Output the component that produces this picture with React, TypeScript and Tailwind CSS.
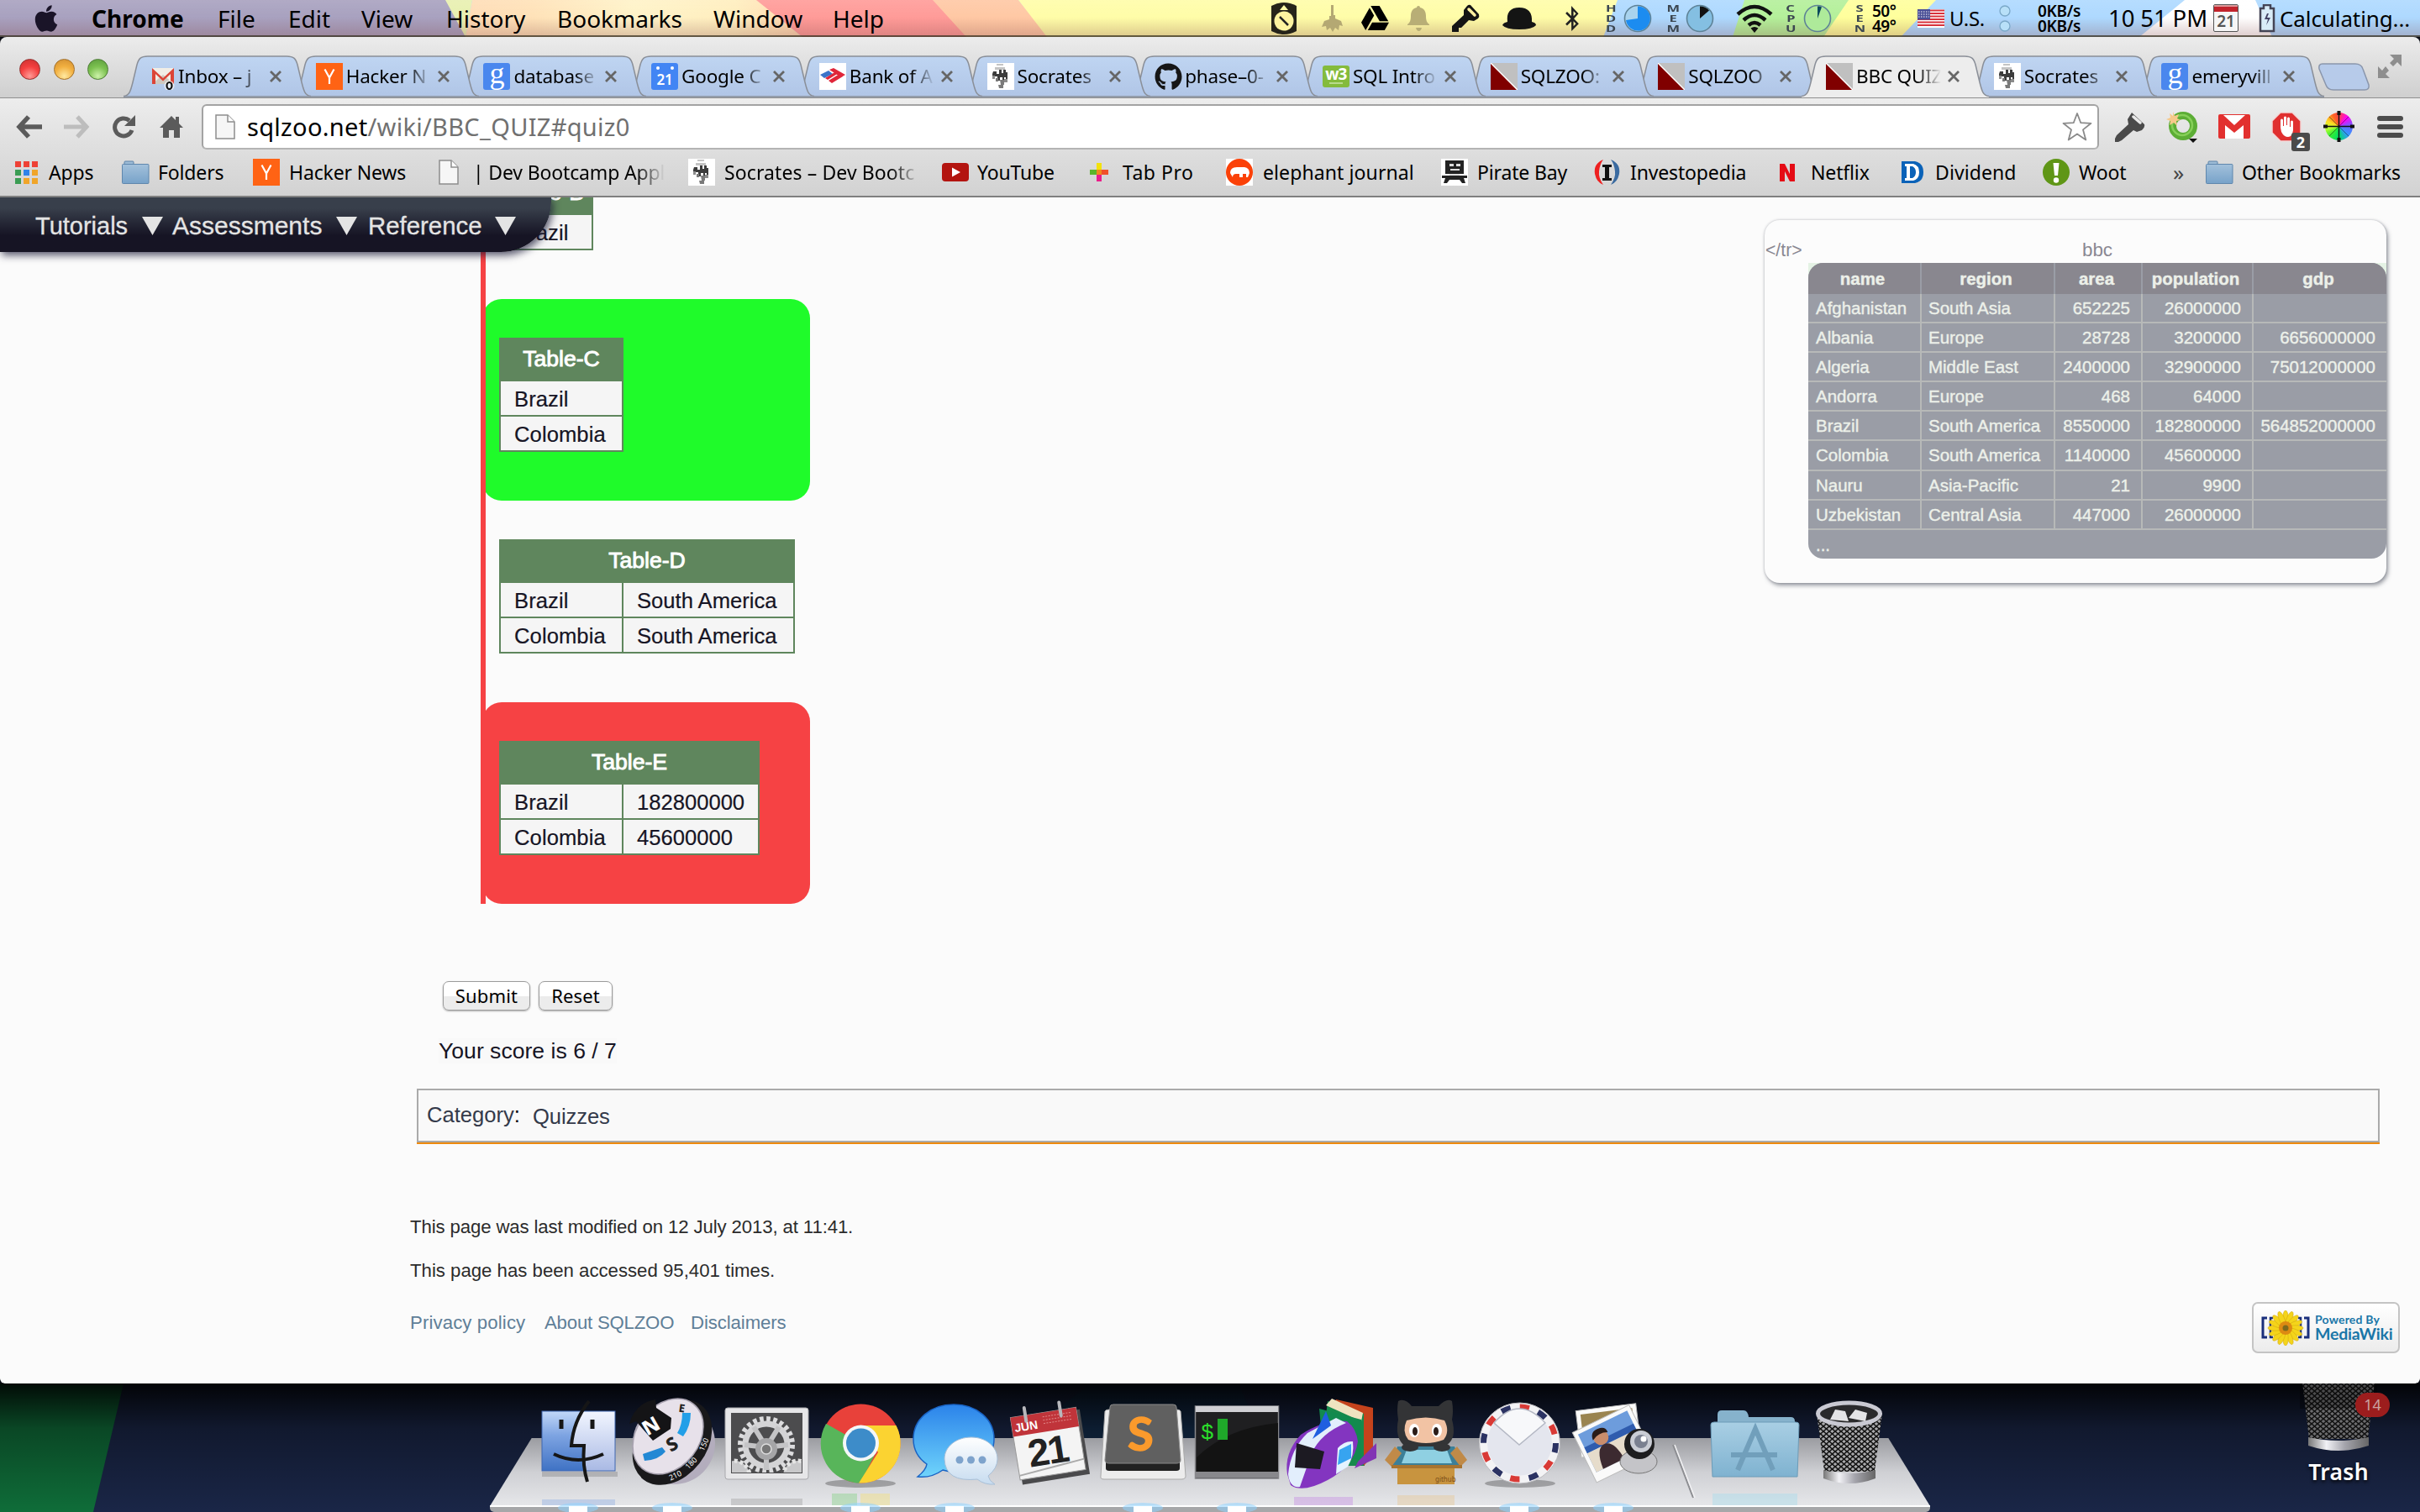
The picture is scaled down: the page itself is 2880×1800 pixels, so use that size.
import React from "react";
import { FaGithub, FaGoogleDrive, FaBluetoothB, FaApple } from "react-icons/fa";

/* ---------- shared favicons ---------- */

const Yc = () => (
  <svg width="32" height="32" viewBox="0 0 32 32">
    <rect width="32" height="32" fill="#ff6314" />
    <path d="M10.500 7.500L16 17.500L21.500 7.500M16 17V25" stroke="#fff" strokeWidth="2.200" fill="none" />
  </svg>
);

const GoogleG = () => (
  <div className="flex h-8 w-8 items-center justify-center rounded-[3px] bg-[#4a87ee]">
    <span className="-mt-[9px] font-['Liberation_Serif',serif] text-[36px] leading-8 text-white">g</span>
  </div>
);

const Cal21 = () => (
  <div className="flex h-8 w-8 flex-col items-center rounded-[3px] bg-[#4285f4]">
    <div className="flex gap-[13px] pt-[4px]">
      <div className="h-[4px] w-[4px] rounded-full bg-white" />
      <div className="h-[4px] w-[4px] rounded-full bg-white" />
    </div>
    <span className="mt-[4px] text-[17px] font-semibold leading-[16px] text-white">21</span>
  </div>
);

const Gmail = () => (
  <svg width="32" height="32" viewBox="0 0 32 32">
    <rect x="5" y="6" width="26" height="19" rx="1" fill="#f1ede6" />
    <path d="M18 14L31 25H5z" fill="#cfc9c0" />
    <path d="M5 25V6L18 18L31 6V25H27V13L18 21.500L9 13V25z" fill="#dc4437" />
    <circle cx="25.500" cy="27" r="6" fill="#fff" opacity=".7" />
    <ellipse cx="25.500" cy="27" rx="3" ry="4" fill="none" stroke="#111" strokeWidth="2.200" />
  </svg>
);

const Boa = () => (
  <svg width="32" height="32" viewBox="0 0 32 32">
    <rect width="32" height="32" fill="#fff" />
    <path d="M1 14L11 9L16 13L6 18z" fill="#3b74c9" />
    <path d="M12 8L17 6L31 14L26 17zM7 18L20 10L23 12L10 20zM11 21L24 13L28 16L15 24z" fill="#e0263a" />
  </svg>
);

const Socrates = () => (
  <svg width="32" height="32" viewBox="0 0 32 32">
    <rect width="32" height="32" fill="#fff" />
    <path d="M11 1h8v2h-8zM9 5h12v3H9z" fill="#c4c4c4" />
    <path d="M7 10h4v3h3v-5h3v4h2v-4h3v3h2v12h-2v-6h-2v5h-2v-5h-3v4h-3v-5H9v3H6v-6z" fill="#3c3c3c" />
    <path d="M10 18h3v4h-3zM15 20h5v6h-4zM13 26h6v4h-5z" fill="#7a7a7a" />
    <path d="M20 19h4v4h-4zM6 15h3v4H6z" fill="#8c8c8c" />
  </svg>
);

const W3 = () => (
  <div className="flex h-[26px] w-8 flex-col items-center rounded-[3px] bg-[#84bb3c]">
    <span className="text-[19px] font-bold leading-[20px] tracking-[-1px] text-white">w3</span>
    <div className="h-[2px] w-[16px] bg-[#b8db8c]" />
  </div>
);

const SqlZoo = () => (
  <svg width="32" height="32" viewBox="0 0 32 32">
    <rect width="32" height="32" fill="#c0c0c0" />
    <path d="M0 0V32H32z" fill="#800000" />
    <path d="M0 0L32 32" stroke="#fff" strokeWidth="1.500" />
  </svg>
);

const PageIcon = () => (
  <svg width="24" height="30" viewBox="0 0 24 30">
    <path d="M1 1H15L23 9V29H1z" fill="#f6f6f6" stroke="#8d8d8d" strokeWidth="1.500" />
    <path d="M15 1V9H23" fill="#fff" stroke="#8d8d8d" strokeWidth="1.500" />
  </svg>
);

const FolderIcon = () => (
  <svg width="33" height="28" viewBox="0 0 33 28">
    <path d="M3 6V2Q3 1 4 1H13Q14 1 14 2V6" fill="#9dbbd6" stroke="#5c83a8" />
    <rect x=".5" y="4.500" width="31.500" height="23" rx="1" fill="url(#fold)" stroke="#5f87ad" />
    <defs>
      <linearGradient id="fold" x2="0" y2="1">
        <stop stopColor="#a3c1db" />
        <stop offset="1" stopColor="#77a2c9" />
      </linearGradient>
    </defs>
  </svg>
);

/* ---------- macOS menu bar ---------- */

function MenuBackdrop() {
  return (
    <svg className="absolute inset-0" width="2880" height="44" viewBox="0 0 2880 44">
      <defs>
        <linearGradient id="peach">
          <stop stopColor="#ffdcb6" />
          <stop offset=".2" stopColor="#ffe2b8" />
          <stop offset=".5" stopColor="#fff3c8" />
          <stop offset=".8" stopColor="#ffeebe" />
          <stop offset="1" stopColor="#ffd8b0" />
        </linearGradient>
      </defs>
      <rect width="2880" height="44" fill="#aed9ff" />
      <path d="M0 0H532L556 44H0z" fill="#a8a1bf" />
      <path d="M530 0H562L554 44z" fill="#e8f0b0" />
      <path d="M562 0H902L955 44H554z" fill="url(#peach)" />
      <path d="M900 0H1112L1152 44H955z" fill="#ff9b98" />
      <path d="M1110 0H1212L1248 44H1150z" fill="#ffc8a4" />
      <path d="M1212 0H1925L1908 44H1246z" fill="#fffda8" />
      <path d="M2076 0H2202L2172 44H2062z" fill="#b4f09a" />
      <path d="M2200 0H2304L2262 44H2170z" fill="#ffff9c" />
      <path d="M2600 0H2684L2704 44H2546z" fill="#ffffff" />
    </svg>
  );
}

function Stack({ t }: { t: string }) {
  return (
    <div className="flex w-[14px] flex-col items-center text-[11px] font-bold leading-[12px] text-[#3b4650]">
      {t.split("").map((c, i) => (
        <span key={i} className="scale-x-150">{c}</span>
      ))}
    </div>
  );
}

function Pie({ base, fill, d }: { base: string; fill: string; d: string }) {
  return (
    <svg width="34" height="34" viewBox="0 0 34 34">
      <circle cx="17" cy="17" r="15.500" fill={base} stroke="#5e8296" strokeWidth="1.600" />
      <path d={d} fill={fill} />
    </svg>
  );
}

function MenuBar() {
  return (
    <div className="relative h-11 w-full shrink-0 overflow-hidden">
      <MenuBackdrop />
      <div className="absolute inset-0 border-b-2 border-[#3a3020]/80 bg-linear-to-b from-white/10 via-transparent to-[#804040]/25" />
      <div className="relative flex h-[43px] items-center whitespace-nowrap text-[28px] leading-[42px] text-black">
        <div className="w-[109px] shrink-0 pl-[37px]">
          <FaApple size={36} color="#1a1428" />
        </div>
        <span className="w-[150px] shrink-0 text-[28px] font-bold">Chrome</span>
        <span className="w-[84px] shrink-0">File</span>
        <span className="w-[87px] shrink-0">Edit</span>
        <span className="w-[101px] shrink-0">View</span>
        <span className="w-[132px] shrink-0">History</span>
        <span className="w-[186px] shrink-0">Bookmarks</span>
        <span className="w-[142px] shrink-0">Window</span>
        <span className="w-[522px] shrink-0">Help</span>
        <div className="w-[59px] shrink-0">
          <svg width="30" height="38" viewBox="0 0 30 38">
            <path d="M0 4Q15 -4 30 4V34Q15 42 0 34z" fill="#26241a" />
            <path d="M15 3L20 9H10z" fill="#fffda8" />
            <circle cx="15" cy="22" r="11.500" fill="#fdf3a0" />
            <path d="M10 17L20 27" stroke="#222" strokeWidth="2.500" />
          </svg>
        </div>
        <div className="w-[48px] shrink-0">
          <svg width="26" height="34" viewBox="0 0 26 34">
            <path d="M12 1h3v12h2v4l7 3 2 6-4-1-1 6-4-3-3 5-3-5-4 3-1-5-5 1 3-7 6-2v-4h2z" fill="#b4a873" />
          </svg>
        </div>
        <div className="w-[54px] shrink-0">
          <FaGoogleDrive size={33} />
        </div>
        <div className="w-[54px] shrink-0">
          <svg width="28" height="32" viewBox="0 0 28 32">
            <path d="M12 3a2 2 0 014 0c5 1 7 5 7 10s1 8 4 10v1H1v-1c3-2 4-5 4-10s2-9 7-10zM11 27h7q-1 4-3.500 4T11 27z" fill="#b8ae76" />
          </svg>
        </div>
        <div className="w-[60px] shrink-0">
          <svg width="33" height="33" viewBox="0 0 33 33">
            <path d="M18 2Q20 0 22 1L32 12Q33 15 31 17L26 20L20 19L11 28H8V33H0V26L14 13V7z" fill="#141414" />
            <path d="M20 6L27 13" stroke="#fff0a0" strokeWidth="3.500" strokeLinecap="round" />
          </svg>
        </div>
        <div className="w-[74px] shrink-0">
          <svg width="40" height="28" viewBox="0 0 40 28">
            <path d="M6 18Q4 1 20 1T35 18Q40 19 40 22Q36 27 20 27T0 22Q1 19 6 18z" fill="#141414" />
          </svg>
        </div>
        <div className="w-[48px] shrink-0">
          <FaBluetoothB size={30} className="-ml-[6px]" color="#222" />
        </div>
        <div className="w-[22px] shrink-0"><Stack t="HDD" /></div>
        <div className="w-[52px] shrink-0">
          <Pie base="#a9d3ee" fill="#1c8cf0" d="M17 17V2.500A14.500 14.500 0 113 19z" />
        </div>
        <div className="w-[22px] shrink-0"><Stack t="MEM" /></div>
        <div className="w-[60px] shrink-0">
          <Pie base="#84bfe2" fill="#111" d="M17 17V2.500A14.500 14.500 0 0128 7.500z" />
        </div>
        <div className="w-[58px] shrink-0">
          <svg width="44" height="34" viewBox="0 0 44 34" fill="none" stroke="#111" strokeWidth="4.500">
            <path d="M2 12Q22 -6 42 12M9 19Q22 7 35 19M15 25Q22 19 29 25" />
            <path d="M22 34L17.500 28.500Q22 25.500 26.500 28.500z" fill="#111" stroke="none" />
          </svg>
        </div>
        <div className="w-[22px] shrink-0"><Stack t="CPU" /></div>
        <div className="w-[60px] shrink-0">
          <Pie base="#aeea9a" fill="#0a4a5c" d="M17 17V2.500Q20 2 22 3.500z" />
        </div>
        <div className="w-[22px] shrink-0"><Stack t="SEN" /></div>
        <div className="w-[54px] shrink-0 text-[19px] font-semibold leading-[18px] tracking-[-0.500px]">
          <div>50°</div>
          <div>49°</div>
        </div>
        <div className="w-[38px] shrink-0">
          <svg width="32" height="22" viewBox="0 0 32 22">
            <rect width="32" height="22" fill="#fff" />
            <path d="M0 1.500H32M0 5H32M0 8.500H32M0 12H32M0 15.500H32M0 19H32" stroke="#d8323c" strokeWidth="1.900" />
            <rect width="15" height="12.500" fill="#4a4f96" />
            <path d="M1 3H14M1 6H14M1 9H14" stroke="#fff" strokeWidth="1" strokeDasharray="1.500 1.500" />
          </svg>
        </div>
        <span className="w-[59px] shrink-0 text-[24px] tracking-[-0.300px]">U.S.</span>
        <div className="w-[46px] shrink-0">
          <svg width="14" height="34" viewBox="0 0 14 34" fill="#b8e0f8" stroke="#7aa8c8" strokeWidth="1.300">
            <circle cx="7" cy="8" r="6" />
            <circle cx="7" cy="26" r="6" />
          </svg>
        </div>
        <div className="w-[84px] shrink-0 text-[19px] font-semibold leading-[18px] tracking-[-0.300px]">
          <div>0KB/s</div>
          <div>0KB/s</div>
        </div>
        <span className="w-[125px] shrink-0 text-[27.500px] tracking-[-0.100px]">10 51 PM</span>
        <div className="w-[54px] shrink-0">
          <div className="h-[33px] w-[30px] rounded-[2px] border-[1.500px] border-[#555] bg-[#f6f6f6] text-center">
            <div className="h-[8px] border-t-2 border-[#d99] bg-[#c2242c]" />
            <div className="text-[19px] font-semibold leading-[23px] text-[#555]">21</div>
          </div>
        </div>
        <div className="w-[25px] shrink-0">
          <svg width="20" height="34" viewBox="0 0 20 34">
            <path d="M6 1h8v4h4v27H2V5h4z" fill="#d9ecf8" stroke="#445" strokeWidth="2.500" />
            <path d="M10 11L7 18h4l-2 7 5-9h-4l2-5z" fill="#446" />
          </svg>
        </div>
        <span className="shrink-0 text-[26px] tracking-[-0.100px]">Calculating...</span>
      </div>
    </div>
  );
}

/* ---------- Chrome window ---------- */

const tabs: { icon: React.ReactNode; title: string; z: string; active?: boolean }[] = [
  { icon: <Gmail />, title: "Inbox – j", z: "z-[13]" },
  { icon: <Yc />, title: "Hacker N", z: "z-[12]" },
  { icon: <GoogleG />, title: "database", z: "z-[11]" },
  { icon: <Cal21 />, title: "Google C", z: "z-[10]" },
  { icon: <Boa />, title: "Bank of A", z: "z-[9]" },
  { icon: <Socrates />, title: "Socrates", z: "z-[8]" },
  { icon: <FaGithub size={33} color="#161616" />, title: "phase–0-", z: "z-[7]" },
  { icon: <W3 />, title: "SQL Intro", z: "z-[6]" },
  { icon: <SqlZoo />, title: "SQLZOO:", z: "z-[5]" },
  { icon: <SqlZoo />, title: "SQLZOO", z: "z-[4]" },
  { icon: <SqlZoo />, title: "BBC QUIZ", z: "z-[20]", active: true },
  { icon: <Socrates />, title: "Socrates", z: "z-[3]" },
  { icon: <GoogleG />, title: "emeryvill", z: "z-[2]" },
];

function Tab({ icon, title, z, active }: (typeof tabs)[number]) {
  return (
    <div className={`relative -mr-[23.300px] h-[50px] w-[223px] shrink-0 ${z}`}>
      <svg className="absolute inset-0" width="223" height="50" viewBox="0 0 223 50">
        <path
          d="M0 48.500C7 48 8.500 42 11 32L16 11C18 4 20 1 29 1H194C203 1 205 4 207 11L212 32C214.500 42 216 48 223 48.500V50H0z"
          fill={active ? "#ededed" : "url(#tabfill)"}
        />
        <path
          d="M0 48.500C7 48 8.500 42 11 32L16 11C18 4 20 1 29 1H194C203 1 205 4 207 11L212 32C214.500 42 216 48 223 48.500"
          fill="none"
          stroke="#8a8f98"
          strokeWidth="1.500"
        />
        {!active && <path d="M0 49H223" stroke="#8a8f98" strokeWidth="1.500" />}
        <defs>
          <linearGradient id="tabfill" x2="0" y2="1">
            <stop stopColor="#bfd5f2" />
            <stop offset="1" stopColor="#b0c5e6" />
          </linearGradient>
        </defs>
      </svg>
      <div className="relative flex h-[50px] items-center pl-[29px]">
        <div className="flex w-[36px] shrink-0 items-center">{icon}</div>
        <div className="mr-[4px] w-[104px] overflow-hidden whitespace-nowrap text-[22.500px] leading-8 tracking-[-0.200px] text-black [mask-image:linear-gradient(to_right,black_70%,transparent_97%)]">
          {title}
        </div>
        <svg width="16" height="16" viewBox="0 0 16 16" stroke="#666" strokeWidth="2.800">
          <path d="M2 2L14 14M14 2L2 14" />
        </svg>
      </div>
    </div>
  );
}

function TabStrip() {
  return (
    <div className="flex h-[73px] shrink-0 items-end border-b border-[#8f8f8f] bg-linear-to-b from-[#ececec] to-[#cfcfcf]">
      <div className="flex w-[147px] shrink-0 gap-[15.500px] self-center pl-[23px] pt-[4px]">
        <div className="h-[25px] w-[25px] rounded-full border-[1.500px] border-[#93302f] bg-[radial-gradient(circle_at_50%_85%,#ff9a96,#f4403f_50%,#c93030)]" />
        <div className="h-[25px] w-[25px] rounded-full border-[1.500px] border-[#a2702a] bg-[radial-gradient(circle_at_50%_85%,#ffe9a0,#f2b040_50%,#cf8c30)]" />
        <div className="h-[25px] w-[25px] rounded-full border-[1.500px] border-[#4d7c36] bg-[radial-gradient(circle_at_50%_85%,#ccf2a8,#7cc150_50%,#5a9a3c)]" />
      </div>
      {tabs.map((t, i) => (
        <Tab key={i} {...t} />
      ))}
      <div className="ml-[14px] flex h-[50px] w-[66px] shrink-0 items-start pt-[8px]">
        <svg width="66" height="36" viewBox="0 0 66 36">
          <path d="M7 2H46Q53 2 55 8L62 27Q63 33 57 33H20Q13 33 11 27L3 8Q2 2 7 2z" fill="#b7cbea" stroke="#8a96ac" strokeWidth="1.500" />
        </svg>
      </div>
      <div className="ml-[7px] h-[51px] shrink-0">
        <svg width="28" height="28" viewBox="0 0 28 28" fill="#8e8e8e">
          <path d="M14 0H28V14L23 9L18 14L14 10L19 5zM0 14V28H14L9 23L13 19L9 14L5 19z" />
        </svg>
      </div>
    </div>
  );
}

const RainbowWheel = () => (
  <div className="relative h-[37px] w-[37px]">
    <div className="absolute inset-[2px] rounded-full bg-[conic-gradient(#f44,#f0f_12%,#66f_25%,#39f_37%,#0d6_50%,#3e3_62%,#bf3_72%,#fd2_82%,#f62_92%,#f44)]" />
    <svg className="absolute inset-0" width="37" height="37" viewBox="0 0 37 37" stroke="#111">
      <path d="M18.500 1V36M1 18.500H36" strokeWidth="1.400" />
      <path d="M7 7L30 30M30 7L7 30" strokeWidth=".8" opacity=".6" />
      <path d="M18.500 0V5M18.500 32V37M0 18.500H5M32 18.500H37" strokeWidth="4" />
    </svg>
  </div>
);

function Toolbar() {
  return (
    <div className="flex h-[67px] shrink-0 items-center bg-linear-to-b from-[#ededed] to-[#dddddd]">
      <div className="w-[54px] shrink-0 pl-[19px]">
        <svg width="33" height="28" viewBox="0 0 33 28" fill="none" stroke="#5b5b5b" strokeWidth="5.500">
          <path d="M31 14H5M15 2L4 14L15 26" />
        </svg>
      </div>
      <div className="w-[59px] shrink-0 pl-[20px]">
        <svg width="33" height="28" viewBox="0 0 33 28" fill="none" stroke="#bdbdbd" strokeWidth="5">
          <path d="M2 14H28M18 2L29 14L18 26" />
        </svg>
      </div>
      <div className="w-[60px] shrink-0 pl-[20px]">
        <svg width="30" height="28" viewBox="0 0 30 28">
          <path d="M24 18A10.500 10.500 0 1121 6.500" fill="none" stroke="#5b5b5b" strokeWidth="5" />
          <path d="M28 0V13H15z" fill="#5b5b5b" />
        </svg>
      </div>
      <div className="w-[67px] shrink-0 pl-[17px]">
        <svg width="28" height="28" viewBox="0 0 28 28" fill="#5b5b5b">
          <path d="M14 1L19 6V2H23V10L28 15H24V27H17V18H11V27H4V15H0z" />
        </svg>
      </div>
      <div className="flex h-[54px] w-[2258px] shrink-0 items-center rounded-[6px] border-2 border-[#a3a3a3] border-b-[#b4b4b4] bg-white pl-[14px] pr-[6px]">
        <PageIcon />
        <div className="ml-[14px] flex-1 whitespace-nowrap text-[29px] leading-[40px] tracking-[0.300px] text-black">
          sqlzoo.net<span className="text-[#707070]">/wiki/BBC_QUIZ#quiz0</span>
        </div>
        <svg width="36" height="36" viewBox="0 0 36 36">
          <path d="M18 2L22.300 13.200L34.500 13.800L25 21.400L28.300 33.500L18 26.500L7.700 33.500L11 21.400L1.500 13.800L13.700 13.200z" fill="#fff" stroke="#8a8a8a" strokeWidth="1.800" strokeLinejoin="round" />
        </svg>
      </div>
      <div className="w-[61px] shrink-0 pl-[19px]">
        <svg width="36" height="36" viewBox="0 0 36 36">
          <path d="M20 1L35 15Q36 19 32 22L26 24L22 22L8 34L4 36H0V32L2 28L16 15L15 9z" fill="#4a4a4a" />
          <path d="M22 6L30 13" stroke="#e8e8e8" strokeWidth="3.500" strokeLinecap="round" />
        </svg>
      </div>
      <div className="w-[62px] shrink-0 pl-[18px]">
        <svg width="40" height="38" viewBox="0 0 40 38">
          <circle cx="21" cy="18" r="12.500" fill="none" stroke="#5cad35" strokeWidth="9" />
          <circle cx="20" cy="17" r="12" fill="none" stroke="#86cf58" strokeWidth="2.500" />
          <path d="M9 1l2 5 5-2-2 5 4 2-5 1 1 6-4-4-5 3 1-5-5-2 5-2-1-5 4 3z" fill="#f6c98a" />
          <path d="M28 33H38L33 38z" fill="#111" />
        </svg>
      </div>
      <div className="w-[64px] shrink-0 pl-[19px]">
        <svg width="38" height="29" viewBox="0 0 38 29">
          <rect width="38" height="29" rx="2" fill="#e2302f" />
          <path d="M8 29V13L19 22L30 13V29z" fill="#fff" />
          <path d="M6 1H32L19 13z" fill="#fff" />
        </svg>
      </div>
      <div className="relative w-[58px] shrink-0 pl-[18px]">
        <svg width="36" height="36" viewBox="0 0 36 36">
          <path d="M11 1H25L35 11V25L25 35H11L1 25V11z" fill="#e02f2f" stroke="#f3d6d6" strokeWidth="1.500" />
          <path d="M11 19V10a1.500 1.500 0 013 0V17h1V7a1.500 1.500 0 013 0V16h1V8a1.500 1.500 0 013 0V18h1V12a1.500 1.500 0 013 0V22q-1 8-6 8-5 0-8-6z" fill="#fff" />
        </svg>
        <div className="absolute left-[42px] top-[25px] h-[22px] w-[22px] rounded-[3px] bg-[#4b4b4b] text-center text-[18px] font-bold leading-[22px] text-white">2</div>
      </div>
      <div className="w-[86px] shrink-0 pl-[22px]">
        <RainbowWheel />
      </div>
      <div className="flex flex-col gap-[4px]">
        <div className="h-[6px] w-[31px] rounded-[3px] bg-[#4c4c4c]" />
        <div className="h-[6px] w-[31px] rounded-[3px] bg-[#4c4c4c]" />
        <div className="h-[6px] w-[31px] rounded-[3px] bg-[#4c4c4c]" />
      </div>
    </div>
  );
}

const FADE = "[mask-image:linear-gradient(to_right,black_85%,transparent)] overflow-hidden";

const bookmarks: { icon: React.ReactNode; iw: string; text: string; tw: string; cls?: string }[] = [
  {
    icon: (
      <div className="grid w-max grid-cols-3 gap-[3px]">
        {["bg-[#ee4136]", "bg-[#ee4136]", "bg-[#ee4136]", "bg-[#3a9c53]", "bg-[#2f83ea]", "bg-[#f0a529]", "bg-[#3a9c53]", "bg-[#f0a529]", "bg-[#f0a529]"].map((c, i) => (
          <div key={i} className={`h-[7px] w-[7px] ${c}`} />
        ))}
      </div>
    ),
    iw: "w-[40px]",
    text: "Apps",
    tw: "w-[87px]",
  },
  { icon: <FolderIcon />, iw: "w-[43px]", text: "Folders", tw: "w-[113px]" },
  { icon: <Yc />, iw: "w-[43px]", text: "Hacker News", tw: "w-[178px]" },
  { icon: <PageIcon />, iw: "w-[41px]", text: "| Dev Bootcamp Appl", tw: "w-[256px]", cls: `${FADE} w-[228px]` },
  { icon: <Socrates />, iw: "w-[43px]", text: "Socrates – Dev Bootc", tw: "w-[259px]", cls: `${FADE} w-[232px] tracking-[0.100px]` },
  {
    icon: (
      <svg width="32" height="22" viewBox="0 0 32 22">
        <rect width="32" height="22" rx="4" fill="#b3140f" />
        <path d="M12 5.500V16.500L22 11z" fill="#fff" />
      </svg>
    ),
    iw: "w-[42px]",
    text: "YouTube",
    tw: "w-[134px]",
  },
  {
    icon: (
      <svg width="22" height="22" viewBox="0 0 22 22">
        <rect x="0" y="8" width="9" height="6" fill="#5ab52a" />
        <rect x="13" y="8" width="9" height="6" fill="#f0512a" />
        <rect x="8" y="0" width="6" height="9" fill="#f3e20c" />
        <rect x="8" y="8" width="6" height="6" fill="#f08a1c" />
        <rect x="8" y="14" width="6" height="8" fill="#ec1c8a" />
      </svg>
    ),
    iw: "w-[39px]",
    text: "Tab Pro",
    tw: "w-[123px]",
    cls: "tracking-[0.500px]",
  },
  {
    icon: (
      <svg width="32" height="32" viewBox="0 0 32 32">
        <rect width="32" height="32" fill="#fff" />
        <circle cx="16" cy="16" r="16" fill="#fb4108" />
        <path d="M5 17Q5 10 13 10H22Q28 11 28 17L26 22H24V18H20V22H16V18H12Q8 18 8 22z" fill="#fff" />
      </svg>
    ),
    iw: "w-[44px]",
    text: "elephant journal",
    tw: "w-[212px]",
    cls: "tracking-[0.100px]",
  },
  {
    icon: (
      <svg width="32" height="32" viewBox="0 0 32 32">
        <rect width="32" height="32" fill="#fff" />
        <path d="M5 2H27V18H5zM1 20H31V23H27L29 29H25L22 25H10L7 29H3L5 23H1z" fill="#222" />
        <path d="M10 6H15V9H10zM18 6H23V9H18zM11 12H22V14H11zM10 18H22V20H10z" fill="#ddd" />
      </svg>
    ),
    iw: "w-[43px]",
    text: "Pirate Bay",
    tw: "w-[138px]",
  },
  {
    icon: (
      <svg width="33" height="32" viewBox="0 0 33 32">
        <path d="M12 1Q0 6 2 18Q4 28 12 31Q6 22 7 15Q8 6 12 1z" fill="#ee2020" />
        <path d="M21 1Q33 6 31 18Q29 28 21 31Q27 22 26 15Q25 6 21 1z" fill="#3a6aa0" />
        <path d="M11 7H22V10H19V23H22V26H11V23H14V10H11z" fill="#111" />
      </svg>
    ),
    iw: "w-[44px]",
    text: "Investopedia",
    tw: "w-[178px]",
  },
  {
    icon: (
      <svg width="18" height="21" viewBox="0 0 18 21">
        <path d="M0 0H6L12 12V0H18V21H12L6 9V21H0z" fill="#e50b15" />
      </svg>
    ),
    iw: "w-[37px]",
    text: "Netflix",
    tw: "w-[108px]",
  },
  {
    icon: (
      <svg width="26" height="26" viewBox="0 0 26 26">
        <path d="M0 0H16Q26 2 26 13T16 26H0z" fill="#0a62b8" />
        <path d="M4 3H14Q21 5 21 13T14 23H4V20H6V6H4zM10 6V20H13Q17 18 17 13T13 6z" fill="#fff" fillRule="evenodd" />
      </svg>
    ),
    iw: "w-[40px]",
    text: "Dividend",
    tw: "w-[128px]",
    cls: "tracking-[0.100px]",
  },
  {
    icon: (
      <svg width="32" height="32" viewBox="0 0 32 32">
        <circle cx="16" cy="16" r="16" fill="#5f9616" />
        <path d="M12.500 5H19.500L18 20H14z" fill="#fff" />
        <circle cx="16" cy="25.500" r="3.200" fill="#fff" />
      </svg>
    ),
    iw: "w-[43px]",
    text: "Woot",
    tw: "w-[112px]",
  },
];

function BookmarksBar() {
  return (
    <div className="flex h-[51px] shrink-0 items-center whitespace-nowrap border-b-2 border-[#7f7f7f] bg-linear-to-b from-[#dddddd] to-[#d2d2d2] pb-[7px] pl-[18px] text-[23px] leading-8 tracking-[-0.150px] text-black">
      {bookmarks.map((b) => (
        <div key={b.text} className="flex shrink-0 items-center">
          <div className={`${b.iw} shrink-0`}>{b.icon}</div>
          <div className={`${b.tw} shrink-0`}>
            <div className={b.cls}>{b.text}</div>
          </div>
        </div>
      ))}
      <span className="w-[39px] shrink-0 text-[26px] leading-6 text-[#444]">»</span>
      <div className="w-[43px] shrink-0"><FolderIcon /></div>
      <span>Other Bookmarks</span>
    </div>
  );
}

/* ---------- page ---------- */

function SiteNav() {
  const items = [
    { t: "Tutorials", w: "w-[127px]", g: "w-[36px]", cls: "text-[29px]" },
    { t: "Assessments", w: "w-[195px]", g: "w-[38px]", cls: "text-[30px]" },
    { t: "Reference", w: "w-[151px]", g: "w-[26px]", cls: "text-[29.400px]" },
  ];
  return (
    <div className="absolute left-0 top-0 flex h-[65px] w-[656px] items-center rounded-br-[60px] bg-linear-to-b from-[#383f4b] from-20% to-[#161424] to-70% pl-[42px] pt-[2px] font-['Liberation_Sans',sans-serif] text-[#e4e4e4] shadow-[2px_4px_10px_rgba(20,20,50,0.7)] [-webkit-text-stroke:0.300px_#e4e4e4]">
      {items.map((i) => (
        <div key={i.t} className="flex items-center">
          <span className={`${i.w} ${i.cls} leading-[40px]`}>{i.t}</span>
          <div className={i.g}>
            <svg width="25" height="22" viewBox="0 0 25 22"><path d="M0 0H25L12.500 22z" fill="#e4e4e4" /></svg>
          </div>
        </div>
      ))}
    </div>
  );
}

function Answer({ title, rows, width, state }: { title: string; rows: string[][]; width: string; state: string }) {
  return (
    <div className={`relative -z-10 -ml-[4px] h-[240px] w-[390px] rounded-[23px] pl-[20px] pt-[46px] ${state}`}>
      <div className={`${width} border-2 border-t-0 border-[#5f865d] text-[25.600px] text-[#161424] [-webkit-text-stroke:0.200px_#161424]`}>
        <div className="h-[52px] bg-[#5f865d] text-center text-[26.600px] leading-[50px] text-white [-webkit-text-stroke:0.900px_white]">{title}</div>
        {rows.map((r, i) => (
          <div key={i} className={`flex bg-[#f5f5f5] leading-[42px] ${i > 0 ? "h-[42px] border-t-2 border-[#5f865d]" : "h-[40px]"}`}>
            <div className="w-[144px] shrink-0 pl-[16px] tracking-[0.080px]">{r[0]}</div>
            {r[1] && <div className="flex-1 border-l-2 border-[#5f865d] pl-[16px]">{r[1]}</div>}
          </div>
        ))}
      </div>
    </div>
  );
}

const bbc = [
  ["Afghanistan", "South Asia", "652225", "26000000", ""],
  ["Albania", "Europe", "28728", "3200000", "6656000000"],
  ["Algeria", "Middle East", "2400000", "32900000", "75012000000"],
  ["Andorra", "Europe", "468", "64000", ""],
  ["Brazil", "South America", "8550000", "182800000", "564852000000"],
  ["Colombia", "South America", "1140000", "45600000", ""],
  ["Nauru", "Asia-Pacific", "21", "9900", ""],
  ["Uzbekistan", "Central Asia", "447000", "26000000", ""],
];

function BbcCard() {
  const grid = "grid grid-cols-[133px_159px_104px_132px_160px]";
  const line = "border-[#b7b9b8]";
  return (
    <div className="absolute right-[40px] top-[27px] h-[432px] w-[740px] rounded-[18px] bg-[#fcfcfc] font-['Liberation_Sans',sans-serif] text-[20.480px] text-[#8a8892] shadow-[2px_3px_5px_rgba(60,65,80,0.5),0_0_3px_rgba(60,65,80,0.3)]">
      <div className="flex h-[51px] items-end leading-[31px]">
        <div className="w-[52px] pl-px text-[21.200px]">&lt;/tr&gt;</div>
        <div className="flex-1 text-center text-[22.400px]">bbc</div>
      </div>
      <div className="ml-[52px] bg-[linear-gradient(#e4f2e4_20px,transparent_20px)]">
        <div className="overflow-hidden rounded-[18px] bg-[#9a9da6] text-[#ecf0e9] [-webkit-text-stroke:0.400px_#ecf0e9]">
          <div className={`${grid} h-[36.500px] bg-[#89878f] text-center font-bold leading-[37px]`}>
            {["name", "region", "area", "population", "gdp"].map((h, i) => (
              <div key={h} className={i ? "border-l-2 border-[#9a9da6] pr-2 pl-1" : "pr-[4px]"}>{h}</div>
            ))}
          </div>
          {bbc.map((r) => (
            <div key={r[0]} className={`${grid} h-[35.200px] border-b-2 ${line} leading-[33.500px]`}>
              {r.map((c, i) => (
                <div key={i} className={`${i ? `border-l-2 ${line}` : ""} ${i > 1 ? "pr-[13px] text-right" : i ? "pl-[8px]" : "pl-[9px]"}`}>{c}</div>
              ))}
            </div>
          ))}
          <div className="h-[34px] pl-[9px] leading-[36px]">...</div>
        </div>
      </div>
    </div>
  );
}

const AquaButton = ({ children, w }: { children: string; w: string }) => (
  <button className={`${w} h-[35px] rounded-[7px] border-[1.500px] border-[#9b9b9b] bg-linear-to-b from-white from-50% to-[#ececec] to-50% pb-[1px] font-['Noto_Sans',sans-serif] text-[22px] leading-[28px] tracking-[0.150px] text-black shadow-[0_1px_2px_rgba(0,0,0,0.3)]`}>
    {children}
  </button>
);

function MediaWikiBadge() {
  return (
    <div className="flex h-[61px] w-[176px] items-center rounded-[7px] border-2 border-[#c4c4c4] bg-linear-to-b from-white to-[#ececec] pl-[9px]">
      <svg width="58" height="42" viewBox="0 0 58 42">
        <path d="M7 9H2V32H7M51 9H56V32H51" fill="none" stroke="#1a2f7c" strokeWidth="3" />
        <path d="M14 9H11V32H14M44 9H47V32H44" fill="none" stroke="#1a2f7c" strokeWidth="2.500" />
        <g fill="#f4d41a" stroke="#d7ac10" strokeWidth=".6">
          {Array.from({ length: 16 }, (_, i) => (
            <ellipse key={i} cx="29" cy="9" rx="3.200" ry="9" transform={`rotate(${i * 22.5} 29 21)`} />
          ))}
        </g>
        <circle cx="29" cy="21" r="8" fill="#dd8a12" />
        <circle cx="29" cy="21" r="3.500" fill="#7d6a1c" />
      </svg>
      <div className="ml-[6px] font-['Lato',sans-serif] font-bold text-[#1a76a8]">
        <div className="whitespace-nowrap text-[14px] leading-[15px] tracking-[0.200px]">Powered By</div>
        <div className="text-[19.500px] leading-[20px] tracking-[-0.200px]">MediaWiki</div>
      </div>
    </div>
  );
}

function WikiPage() {
  return (
    <div className="relative isolate flex-1 overflow-hidden rounded-b-[5px] bg-[#fbfbfb] font-['Liberation_Sans',sans-serif]">
      <div className="ml-[572px] mt-[-77px] flex flex-col border-l-[6px] border-[#f64244]">
        <div className="h-[198px]">
          <Answer title="Table-B" rows={[["Brazil"]]} width="w-[112px]" state="" />
        </div>
        <Answer title="Table-C" rows={[["Brazil"], ["Colombia"]]} width="w-[148px]" state="bg-[#1ffb2a]" />
        <Answer title="Table-D" rows={[["Brazil", "South America"], ["Colombia", "South America"]]} width="w-[352px]" state="" />
        <Answer title="Table-E" rows={[["Brazil", "182800000"], ["Colombia", "45600000"]]} width="w-[310px]" state="bg-[#f64244]" />
      </div>
      <div className="ml-[527px] mt-[92px] flex gap-[10px]">
        <AquaButton w="w-[104px]">Submit</AquaButton>
        <AquaButton w="w-[88px]">Reset</AquaButton>
      </div>
      <div className="ml-[522px] mt-[33px] h-[30px] w-max bg-[#f9f9f9] text-[26.600px] leading-[30px] text-[#161424]">Your score is 6 / 7</div>
      <div className="ml-[496px] mt-[30px] w-[2336px] border-b-2 border-[#ee8a0c]">
        <div className="flex h-[64px] items-center border-2 border-[#aaaaaa] bg-[#f9f9f9] pl-[10px] text-[25.600px] text-[#343a4a]">
          <span className="w-[126px] pb-[2px]">Category<span className="text-black">:</span></span>
          <span className="pt-[2px] tracking-[-0.100px]">Quizzes</span>
        </div>
      </div>
      <div className="flex justify-between pl-[488px] pr-[24px] text-[22.200px] leading-[30px] text-[#2b2b2b]">
        <div className="pt-[84px]">
          <p className="tracking-[-0.120px]">This page was last modified on 12 July 2013, at 11:41.</p>
          <p className="mt-[22px]">This page has been accessed 95,401 times.</p>
          <div className="mt-[32px] flex text-[#5f7f98]">
            <span className="w-[160px] tracking-[0.120px]">Privacy policy</span>
            <span className="w-[174px] tracking-[-0.200px]">About SQLZOO</span>
            <span className="tracking-[-0.100px]">Disclaimers</span>
          </div>
        </div>
        <div className="pt-[188px]"><MediaWikiBadge /></div>
      </div>
      <SiteNav />
      <BbcCard />
    </div>
  );
}

/* ---------- dock ---------- */

function Slot({ x, w, children }: { x: number; w: number; children: React.ReactNode }) {
  return (
    <svg className="shrink-0 overflow-visible" width={w} height="145" viewBox={`${x} 1655 ${w} 145`}>
      {children}
    </svg>
  );
}

const Lamp = ({ x }: { x: number }) => (
  <g>
    <ellipse cx={x} cy="1795" rx="24" ry="6" fill="#8fd4ff" opacity=".55" />
    <rect x={x - 11} y="1793" width="22" height="7" fill="#fff" />
  </g>
);

const polar = (cx: number, cy: number, r: number, deg: number) =>
  `${cx + r * Math.cos((deg * Math.PI) / 180)} ${cy + r * Math.sin((deg * Math.PI) / 180)}`;

function Basket({ x, y, w, h, id, wire }: { x: number; y: number; w: number; h: number; id: string; wire: string }) {
  return (
    <g>
      <defs>
        <pattern id={id} width="7" height="6" patternUnits="userSpaceOnUse">
          <rect width="7" height="6" fill={wire} />
          <path d="M0 0L7 6M7 0L0 6" stroke="#111" strokeWidth="1.500" />
        </pattern>
        <linearGradient id={`${id}m`}>
          <stop stopColor="#777" />
          <stop offset=".3" stopColor="#f2f2f6" />
          <stop offset=".6" stopColor="#a5a5ad" />
          <stop offset="1" stopColor="#666" />
        </linearGradient>
      </defs>
      <path d={`M${x + 2} ${y + 10}L${x + 11} ${y + h - 16}H${x + w - 11}L${x + w - 2} ${y + 10}z`} fill={`url(#${id})`} />
      <path
        d={`M${x + 10} ${y + h - 18}Q${x + w / 2} ${y + h - 10} ${x + w - 10} ${y + h - 18}V${y + h - 8}Q${x + w / 2} ${y + h + 4} ${x + 10} ${y + h - 8}z`}
        fill={`url(#${id}m)`}
      />
    </g>
  );
}

function Dock() {
  return (
    <div className="relative flex h-[145px] pl-[635px]">
      <div className="absolute bottom-[7px] left-[583px] h-[81px] w-[1714px] bg-linear-to-b from-[#9b9ca1] via-[#cfd0d4] to-[#e6e7ea] [clip-path:polygon(2.9%_0,97.100%_0,100%_100%,0_100%)]" />
      <div className="absolute bottom-0 left-[583px] h-[8px] w-[1714px] rounded-b-[5px] border-t-2 border-white bg-[#a6a7a9]" />
      <div className="relative flex">
        <Slot x={635} w={110}>
          <defs>
            <linearGradient id="fl" x2="0" y2="1"><stop stopColor="#c2d8f8" /><stop offset=".4" stopColor="#7ea4e2" /><stop offset="1" stopColor="#3f72c4" /></linearGradient>
            <linearGradient id="fr" x2="0" y2="1"><stop stopColor="#f2f6ff" /><stop offset="1" stopColor="#a9b9e4" /></linearGradient>
          </defs>
          <rect x="645" y="1752" width="90" height="6" fill="#555" opacity=".25" />
          <rect x="645" y="1680" width="87" height="71" fill="url(#fr)" />
          <path d="M645 1680H694Q682 1700 679 1721H693L695 1751H645z" fill="url(#fl)" />
          <rect x="645" y="1680" width="87" height="71" fill="none" stroke="#3f66b0" />
          <path d="M701 1668Q682 1692 680 1721H695Q693 1745 699 1764" fill="none" stroke="#161616" strokeWidth="4" />
          <path d="M659 1731Q688 1745 718 1731" fill="none" stroke="#161616" strokeWidth="4" />
          <path d="M668 1690V1701M705 1690V1701" stroke="#161616" strokeWidth="5" />
          <rect x="645" y="1785" width="87" height="7" fill="#7ea4e2" opacity=".35" />
          <Lamp x={688} />
        </Slot>
        <Slot x={745} w={112}>
          <ellipse cx="802" cy="1718" rx="49" ry="49" fill="#b3adbd" />
          <ellipse cx="800" cy="1717" rx="56" ry="41" transform="rotate(-52 800 1717)" fill="#19191b" />
          <ellipse cx="795" cy="1710" rx="49" ry="37" transform="rotate(-52 795 1710)" fill="#e7e1ea" stroke="#a8a2b0" strokeWidth="1.500" />
          <path d="M812 1682L822 1682Q822 1698 813 1710L806 1706Q812 1696 812 1682z" fill="#229fe8" />
          <path d="M765 1731L788 1723L792 1728Q784 1738 767 1739z" fill="#2288d4" />
          <path d="M749 1695Q756 1670 780 1666L781 1676L799 1688L798 1701L777 1715L757 1692z" fill="#141416" />
          <text x="766" y="1706" transform="rotate(-30 775 1700)" fontSize="24" fontWeight="800" fill="#fff">N</text>
          <text x="794" y="1727" transform="rotate(-30 800 1720)" fontSize="22" fontWeight="800" fill="#222">S</text>
          <text x="808" y="1681" transform="rotate(8 812 1676)" fontSize="13" fontWeight="800" fill="#222">E</text>
          <text x="796" y="1760" transform="rotate(-25 803 1757)" fontSize="9" fill="#fff">210</text>
          <text x="814" y="1745" transform="rotate(-45 822 1741)" fontSize="9" fill="#fff">180</text>
          <text x="829" y="1723" transform="rotate(-65 837 1719)" fontSize="9" fill="#fff">150</text>
          <Lamp x={800} />
        </Slot>
        <Slot x={857} w={113}>
          <rect x="863" y="1676" width="99" height="85" rx="3" fill="#e6e6e8" stroke="#a8a8ac" />
          <rect x="870" y="1682" width="85" height="72" fill="#4c4c4e" />
          <svg x="871" y="1683" width="83" height="70" viewBox="871 1683 83 70">
            <circle cx="912" cy="1720" r="30" fill="none" stroke="#dcdcde" strokeWidth="8" strokeDasharray="4.500 3.350" />
            <circle cx="912" cy="1720" r="25" fill="none" stroke="#d4d4d6" strokeWidth="7" />
            <circle cx="874" cy="1757" r="18" fill="#c8c8ca" stroke="#e4e4e4" strokeWidth="5" strokeDasharray="4 3" />
            <circle cx="950" cy="1757" r="18" fill="#c8c8ca" stroke="#e4e4e4" strokeWidth="5" strokeDasharray="4 3" />
            <path d={`M912 1723L${polar(912, 1720, 26, -125)}M912 1723L${polar(912, 1720, 26, -55)}M912 1723L${polar(912, 1720, 26, 180)}M912 1723L${polar(912, 1720, 26, 0)}M912 1723V1750`} stroke="#c4c4c6" strokeWidth="6" />
            <circle cx="912" cy="1725" r="13" fill="#a5a5a7" />
            <circle cx="912" cy="1725" r="6" fill="#777" stroke="#ddd" strokeWidth="1.500" />
          </svg>
          <rect x="870" y="1784" width="85" height="8" fill="#888" opacity=".3" />
        </Slot>
        <Slot x={970} w={109}>
          <ellipse cx="1024" cy="1766" rx="42" ry="5" fill="#333" opacity=".35" />
          <circle cx="1024.500" cy="1718.500" r="47" fill="#e8413a" />
          <path d="M1024.500 1718.500L983 1695A47 47 0 001024 1765.500L1046 1722z" fill="#58b55a" />
          <path d="M1024.500 1697H1066.500A47 47 0 011022 1765.500L1045 1729z" fill="#fbd331" />
          <path d="M983 1695L1004 1730L1024 1718z" fill="#58b55a" />
          <circle cx="1024.500" cy="1718" r="21.500" fill="#f5f7f8" />
          <circle cx="1024.500" cy="1718" r="17.500" fill="#3d8cc9" />
          <rect x="990" y="1778" width="30" height="14" fill="#7fd07f" opacity=".4" />
          <rect x="1024" y="1778" width="35" height="14" fill="#f4de70" opacity=".4" />
          <Lamp x={1024} />
        </Slot>
        <Slot x={1079} w={115}>
          <defs>
            <linearGradient id="msg" x2="0" y2="1"><stop stopColor="#2b83ea" /><stop offset="1" stopColor="#6fd4fb" /></linearGradient>
            <linearGradient id="msg2" x2="0" y2="1"><stop stopColor="#fff" /><stop offset="1" stopColor="#c7dcf0" /></linearGradient>
          </defs>
          <path d="M1135 1672C1163 1672 1183 1690 1183 1713S1163 1752 1135 1752Q1128 1752 1122 1750Q1108 1760 1092 1758Q1102 1750 1103 1743Q1087 1732 1087 1713C1087 1690 1107 1672 1135 1672z" fill="url(#msg)" stroke="#1a63c4" strokeWidth="1.500" />
          <path d="M1156 1711C1173 1711 1187 1722 1187 1737Q1187 1748 1176 1757Q1177 1763 1184 1767Q1172 1768 1163 1761Q1125 1765 1124 1737C1124 1722 1138 1711 1156 1711z" fill="url(#msg2)" stroke="#a8c0d8" />
          <g fill="#7ea3cc"><circle cx="1142" cy="1738" r="4.500" /><circle cx="1155.500" cy="1738" r="4.500" /><circle cx="1169" cy="1738" r="4.500" /></g>
          <Lamp x={1136} />
        </Slot>
        <Slot x={1194} w={109}>
          <g transform="rotate(-9 1248 1720)">
            <rect x="1210" y="1684" width="81" height="78" fill="#4a4a4c" />
            <rect x="1208" y="1681" width="79" height="75" fill="#f4f4f4" stroke="#999" />
            <rect x="1208" y="1681" width="79" height="23" fill="#c0343a" />
            <text x="1211" y="1699" fontSize="14" fontWeight="700" fill="#fff" fontFamily="Liberation Sans">JUN</text>
            <path d="M1246 1686H1280M1246 1690H1280M1246 1694H1280" stroke="#e08a8a" strokeDasharray="2 1.500" />
            <text x="1222" y="1743" fontSize="46" fontWeight="700" letterSpacing="-2" fill="#222" fontFamily="Liberation Sans">21</text>
            <path d="M1208 1751L1287 1743" stroke="#aaa" strokeWidth="2" />
            <path d="M1226 1672V1688M1268 1672V1688" stroke="#b8b8bc" strokeWidth="4" strokeLinecap="round" />
          </g>
        </Slot>
        <Slot x={1303} w={113}>
          <path d="M1315 1680Q1316 1678 1320 1678H1400Q1404 1678 1405 1680L1411 1757Q1411 1761 1406 1761H1314Q1309 1761 1310 1757z" fill="#ececec" stroke="#aaa" />
          <path d="M1316 1740H1404V1748Q1404 1751 1400 1751H1320Q1316 1751 1316 1748z" fill="#222" />
          <path d="M1321 1675Q1321 1672 1325 1672H1396Q1400 1672 1400 1675L1405 1738Q1405 1742 1400 1742H1320Q1315 1742 1315 1738z" fill="#606060" stroke="#8a8a8a" />
          <text x="1342" y="1727" fontSize="56" fontWeight="700" fill="#fb9a2c" stroke="#fb9a2c" strokeWidth="1.500" fontFamily="Lato">S</text>
          <Lamp x={1360} />
        </Slot>
        <Slot x={1416} w={110}>
          <rect x="1422.500" y="1674" width="99" height="86" fill="#1f1f21" stroke="#88888c" strokeWidth="1.500" />
          <path d="M1424 1735Q1460 1700 1521 1694V1752H1424z" fill="#131313" />
          <rect x="1423" y="1674" width="98" height="7" fill="#d0d0d4" />
          <rect x="1423" y="1752" width="98" height="7" fill="#88888c" />
          <text x="1429" y="1713" fontSize="26" fill="#2be02b" fontFamily="Liberation Mono">$</text>
          <rect x="1449" y="1689" width="12" height="25" fill="#1fa82a" />
          <Lamp x={1472} />
        </Slot>
        <Slot x={1526} w={118}>
          <path d="M1580 1668L1624 1680V1745H1571z" fill="#178a4c" />
          <path d="M1590 1666L1634 1676V1733L1623 1745V1683L1587 1672z" fill="#c5431c" />
          <path d="M1578 1673L1585 1665L1622 1682L1620 1692z" fill="#efe3c0" />
          <path d="M1570 1677L1620 1690V1738L1575 1730z" fill="#128a4e" />
          <path d="M1616 1740L1638 1718V1736L1612 1748z" fill="#8234b4" />
          <path d="M1532 1755Q1528 1730 1548 1708Q1575 1690 1603 1692Q1614 1700 1616 1716Q1612 1745 1580 1762Q1550 1778 1536 1768z" fill="#8335c0" />
          <path d="M1533 1755Q1536 1725 1556 1706L1590 1688L1602 1694Q1572 1706 1561 1730L1547 1770Q1535 1772 1533 1755z" fill="#e2eefc" />
          <path d="M1578 1680L1584 1697L1562 1713z" fill="#1f5fe0" />
          <path d="M1543 1718L1576 1728L1571 1749L1541 1747z" fill="#1c1a22" />
          <path d="M1592 1724Q1600 1715 1610 1716Q1612 1732 1604 1746L1590 1755z" fill="#e4f4ff" />
          <path d="M1594 1726L1608 1719V1736L1592 1744z" fill="#37a4f0" />
          <rect x="1540" y="1782" width="70" height="10" fill="#b86ae0" opacity=".3" />
        </Slot>
        <Slot x={1644} w={109}>
          <path d="M1664 1668Q1672 1664 1680 1674H1712Q1722 1664 1728 1668Q1730 1680 1728 1690Q1734 1712 1722 1720Q1716 1728 1697 1728T1670 1720Q1660 1710 1664 1690Q1662 1678 1664 1668z" fill="#333436" />
          <path d="M1674 1691Q1697 1684 1719 1691Q1726 1704 1718 1714Q1697 1722 1676 1714Q1668 1704 1674 1691z" fill="#f2c3a4" />
          <ellipse cx="1683" cy="1703" rx="6" ry="8" fill="#fff" /><ellipse cx="1710" cy="1703" rx="6" ry="8" fill="#fff" />
          <ellipse cx="1684" cy="1704" rx="3" ry="5" fill="#2a1c18" /><ellipse cx="1709" cy="1704" rx="3" ry="5" fill="#2a1c18" />
          <path d="M1684 1718H1710V1735H1684z" fill="#333436" />
          <path d="M1663 1722H1731L1740 1746H1656z" fill="#3c7f98" />
          <path d="M1674 1726H1722L1728 1742H1668z" fill="#8fd0e2" />
          <path d="M1660 1722L1648 1738L1656 1746L1668 1730zM1734 1722L1746 1738L1738 1746L1726 1730z" fill="#c08a48" />
          <ellipse cx="1678" cy="1723" rx="10" ry="5" fill="#333436" /><ellipse cx="1716" cy="1723" rx="10" ry="5" fill="#333436" />
          <rect x="1663" y="1745" width="68" height="22" fill="#c8943f" />
          <rect x="1656" y="1744" width="84" height="4" fill="#a87430" />
          <text x="1708" y="1764" fontSize="8" fill="#7a4d18">github</text>
          <rect x="1663" y="1780" width="68" height="12" fill="#e8c080" opacity=".35" />
        </Slot>
        <Slot x={1753} w={109}>
          <ellipse cx="1809" cy="1766" rx="42" ry="5" fill="#333" opacity=".35" />
          <circle cx="1808.500" cy="1718" r="48" fill="#f3f3f5" stroke="#b8b8bc" />
          <circle cx="1808.500" cy="1718" r="43" fill="none" stroke="#2b3262" strokeWidth="7" strokeDasharray="11.250 33.770" />
          <circle cx="1808.500" cy="1718" r="43" fill="none" stroke="#d93a36" strokeWidth="7" strokeDasharray="11.250 33.770" strokeDashoffset="-22.500" />
          <circle cx="1808.500" cy="1718" r="38.500" fill="#e4e6ee" />
          <path d="M1778 1694Q1808 1660 1839 1694L1808 1720z" fill="#f7f8fa" stroke="#b4b8c4" strokeWidth="1.500" />
          <Lamp x={1808} />
        </Slot>
        <Slot x={1862} w={118}>
          <rect x="1878" y="1675" width="72" height="56" transform="rotate(-7 1914 1700)" fill="#fafafa" stroke="#bbb" />
          <rect x="1883" y="1680" width="62" height="46" transform="rotate(-7 1914 1700)" fill="#9a8450" />
          <g transform="rotate(-26 1919 1719)">
            <rect x="1882" y="1686" width="75" height="66" fill="#fafafa" stroke="#bbb" />
            <rect x="1887" y="1691" width="65" height="50" fill="#6d9cdc" />
            <rect x="1887" y="1708" width="65" height="8" fill="#2f5cae" />
            <rect x="1887" y="1716" width="65" height="25" fill="#e6dccb" />
            <circle cx="1910" cy="1706" r="9" fill="#c98d6c" />
            <path d="M1900 1705Q1901 1694 1911 1695T1920 1704Q1910 1699 1900 1705z" fill="#2a1c18" />
            <path d="M1896 1741Q1898 1715 1910 1715T1924 1741z" fill="#3c2a30" />
          </g>
          <ellipse cx="1950" cy="1740" rx="22" ry="14" fill="#c4c4c8" stroke="#777" />
          <circle cx="1951" cy="1719" r="18" fill="#1d1d1f" />
          <circle cx="1953" cy="1716" r="13" fill="#c9ccd4" />
          <circle cx="1953" cy="1716" r="8" fill="#7a8090" />
          <circle cx="1956" cy="1713" r="3.500" fill="#fff" />
          <Lamp x={1920} />
        </Slot>
        <Slot x={1980} w={46}>
          <path d="M1991 1720L2015 1783" stroke="#8d8e92" strokeWidth="2" />
          <path d="M1993 1720L2017 1783" stroke="#f2f2f4" strokeWidth="1.500" />
        </Slot>
        <Slot x={2026} w={124}>
          <defs>
            <linearGradient id="apf" x2="0" y2="1"><stop stopColor="#a9cfe4" /><stop offset="1" stopColor="#7fb2d0" /></linearGradient>
          </defs>
          <path d="M2044 1684Q2044 1679 2049 1679H2075Q2080 1679 2081 1687H2131Q2136 1687 2136 1692V1710H2044z" fill="#86b2cc" />
          <path d="M2036 1696Q2036 1693 2040 1693H2137Q2141 1693 2141 1696L2139 1758H2038z" fill="url(#apf)" stroke="#6d9cb8" />
          <path d="M2068 1750L2089 1701L2110 1750M2060 1732H2115" fill="none" stroke="#719fbb" strokeWidth="6" />
          <rect x="2038" y="1778" width="101" height="14" fill="#a8dcea" opacity=".45" />
        </Slot>
        <Slot x={2150} w={100}>
          <Basket x={2160} y={1672} w={82} h={96} id="bk" wire="#a9a9ab" />
          <ellipse cx="2200.500" cy="1683" rx="37" ry="13" fill="#2a2a2c" stroke="#c9c9d2" strokeWidth="5" />
          <path d="M2178 1690L2184 1678L2196 1680L2200 1692zM2200 1688L2208 1678L2222 1682L2220 1692z" fill="#e4e4e6" />
        </Slot>
      </div>
    </div>
  );
}

function Desktop() {
  return (
    <div className="relative flex h-[153px] shrink-0 flex-col justify-end overflow-hidden bg-[#1a2647]">
      <div className="absolute inset-y-0 left-0 w-[147px] bg-[#0f6d39] [clip-path:polygon(0_0,100%_0,75.500%_100%,0_100%)]" />
      <div className="absolute inset-y-0 left-[1100px] w-[440px] bg-[#0c3150]/50 [clip-path:polygon(45%_0,85%_0,100%_100%,0_100%)]" />
      <div className="absolute inset-0 bg-linear-to-b from-black/90 via-black/35 via-35% to-transparent" />
      <div className="absolute right-[37px] top-0 flex w-[120px] flex-col items-center">
        <svg className="overflow-visible" width="92" height="84" viewBox="0 0 92 84">
          <Basket x={0} y={-20} w={92} h={102} id="bd" wire="#6c6c6e" />
          <path d="M0 0H92V30H0z" fill="#000" opacity=".3" />
        </svg>
        <div className="absolute left-[80px] top-[11px] flex h-[29px] w-[41px] items-center justify-center rounded-full bg-[#9c1d1d] text-[18px] text-[#c9a0a0]">14</div>
        <span className="mt-[5px] text-[26.500px] font-semibold leading-[32px] tracking-[0.300px] text-white [text-shadow:0_2px_4px_black]">Trash</span>
      </div>
      <Dock />
    </div>
  );
}

export default function App() {
  return (
    <div className="flex h-[1800px] w-[2880px] flex-col overflow-hidden bg-[#0a0c14] font-['Noto_Sans',sans-serif]">
      <MenuBar />
      <div className="flex h-[1603px] shrink-0 flex-col overflow-hidden rounded-t-[8px] rounded-b-[6px]">
        <TabStrip />
        <Toolbar />
        <BookmarksBar />
        <WikiPage />
      </div>
      <Desktop />
    </div>
  );
}
